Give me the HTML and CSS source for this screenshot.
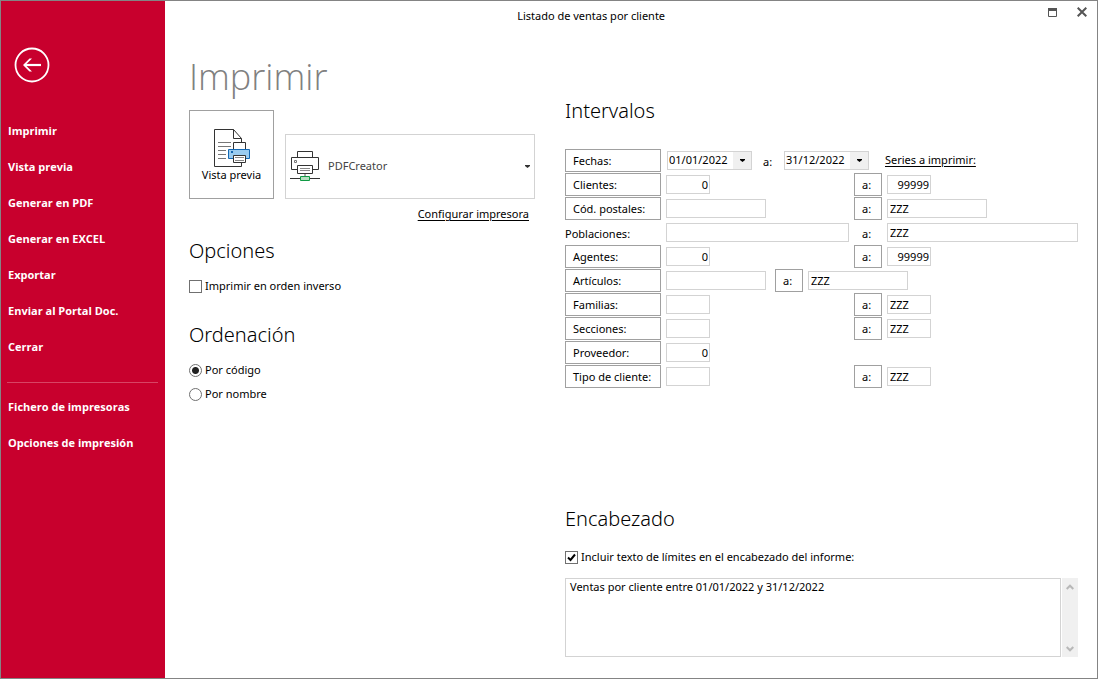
FILE: index.html
```html
<!DOCTYPE html>
<html lang="es">
<head>
<meta charset="utf-8">
<title>Listado de ventas por cliente</title>
<link rel="stylesheet" href="styles.css">
</head>
<body>
<div class="window">
  <nav class="sidebar">
    <button class="back" aria-label="Volver">
      <svg width="36" height="36" viewBox="0 0 36 36" fill="none" stroke="#fff"><circle cx="18" cy="18" r="16.5" stroke-width="1.8"/><path d="M10.500 18H27" stroke-width="2.200"/><path d="M18 11.500h-2.500L9 18l6.500 6.500H18L11.500 18z" fill="#fff" stroke="none"/></svg>
    </button>
    <ul class="menu">
      <li><a href="#">Imprimir</a></li>
      <li><a href="#">Vista previa</a></li>
      <li><a href="#">Generar en PDF</a></li>
      <li><a href="#">Generar en EXCEL</a></li>
      <li><a href="#">Exportar</a></li>
      <li><a href="#">Enviar al Portal Doc.</a></li>
      <li><a href="#">Cerrar</a></li>
    </ul>
    <hr class="divider">
    <ul class="menu">
      <li><a href="#">Fichero de impresoras</a></li>
      <li><a href="#">Opciones de impresión</a></li>
    </ul>
  </nav>
  <div class="body">
    <header class="titlebar">
      <span class="caption">Listado de ventas por cliente</span>
      <div class="controls">
        <button aria-label="Maximizar"><svg width="9" height="9" viewBox="0 0 9 9"><path d="M.5.5h8v8h-8z" fill="none" stroke="#555"/><path d="M0 0h9v3H0z" fill="#555"/></svg></button>
        <button aria-label="Cerrar ventana"><svg width="10" height="10" viewBox="0 0 10 10"><path d="M.7.7l8.600 8.600M9.300.7L.7 9.300" stroke="#555" stroke-width="2"/></svg></button>
      </div>
    </header>
    <main class="content">
      <section class="left">
        <h1>Imprimir</h1>
        <div class="print-row">
          <button class="preview">
            <svg width="36" height="38" viewBox="0 0 36 38" fill="none">
              <path d="M27.500 13V9.500L19.500.5H.5v37h27V34" fill="#fff" stroke="#333"/>
              <path d="M19.500.5v9h8" stroke="#333"/>
              <path d="M4 13.500h13M4 17.500h13M4 21.500h8M4 25.500h8M4 29.500h8" stroke="#777"/>
              <path d="M19.500 13.500h12v8h-12z" fill="#fff" stroke="#333"/>
              <path d="M14.500 20.500h21v9h-21z" fill="#9accf0" stroke="#1468b3"/>
              <path d="M17 22h2v2h-2z" fill="#1468b3"/>
              <path d="M19.500 26.500h12v7h-12z" fill="#fff" stroke="#333"/>
              <path d="M21 28.500h9M21 31.500h9" stroke="#888"/>
            </svg>
            <span>Vista previa</span>
          </button>
          <div class="printer">
            <svg width="30" height="31" viewBox="0 0 30 31" fill="none">
              <path d="M7.500 6.500v-6h15v6" fill="#fff" stroke="#333"/>
              <path d="M1.500 6.500h27v12h-27z" fill="#fff" stroke="#333"/>
              <path d="M4.500 9.500h2v2h-2z" stroke="#777"/>
              <path d="M7.500 14.500h15v8h-15z" fill="#fff" stroke="#333"/>
              <path d="M10 17.500h10M10 19.500h10" stroke="#888"/>
              <path d="M15 23v2" stroke="#aaa" stroke-width="2"/>
              <path d="M0 27.500h30" stroke="#333"/>
              <path d="M10.500 25.500h9v4h-9z" fill="#b5dfc0" stroke="#109a44"/>
            </svg>
            <select aria-label="Impresora"><option>PDFCreator</option></select>
            <svg width="5" height="3" viewBox="0 0 5 3"><path d="M0 0h5v1L2.500 3 0 1z" fill="#333"/></svg>
          </div>
        </div>
        <a class="link configure" href="#">Configurar impresora</a>
        <h2>Opciones</h2>
        <label class="choice"><input type="checkbox">Imprimir en orden inverso</label>
        <h2 class="order">Ordenación</h2>
        <label class="choice"><input type="radio" name="orden" checked>Por código</label>
        <label class="choice"><input type="radio" name="orden">Por nombre</label>
      </section>
      <section class="right">
        <h2 class="ranges-title">Intervalos</h2>
        <div class="ranges">
          <div class="row dates">
            <button class="box">Fechas:</button>
            <span class="date"><input aria-label="Fecha inicial" value="01/01/2022"><button aria-label="Abrir calendario inicial"><svg width="5" height="3" viewBox="0 0 5 3"><path d="M0 0h5v1L2.500 3 0 1z"/></svg></button></span>
            <span class="to">a:</span>
            <span class="date"><input aria-label="Fecha final" value="31/12/2022"><button aria-label="Abrir calendario final"><svg width="5" height="3" viewBox="0 0 5 3"><path d="M0 0h5v1L2.500 3 0 1z"/></svg></button></span>
            <a class="link" href="#">Series a imprimir:</a>
          </div>
          <div class="row">
            <button class="box">Clientes:</button><input class="field short num" aria-label="Cliente inicial" value="0">
            <button class="box">a:</button><input class="field short num" aria-label="Cliente final" value="99999">
          </div>
          <div class="row">
            <button class="box">Cód. postales:</button><input class="field medium" aria-label="Código postal inicial">
            <button class="box">a:</button><input class="field medium" aria-label="Código postal final" value="ZZZ">
          </div>
          <div class="row">
            <label class="plain" for="pob">Poblaciones:</label><input class="field" id="pob">
            <label class="plain mid" for="pob2">a:</label><input class="field" id="pob2" value="ZZZ">
          </div>
          <div class="row">
            <button class="box">Agentes:</button><input class="field short num" aria-label="Agente inicial" value="0">
            <button class="box">a:</button><input class="field short num" aria-label="Agente final" value="99999">
          </div>
          <div class="row articles">
            <button class="box">Artículos:</button><input class="field medium" aria-label="Artículo inicial">
            <button class="box">a:</button><input class="field medium" aria-label="Artículo final" value="ZZZ">
          </div>
          <div class="row">
            <button class="box">Familias:</button><input class="field short" aria-label="Familia inicial">
            <button class="box">a:</button><input class="field short" aria-label="Familia final" value="ZZZ">
          </div>
          <div class="row">
            <button class="box">Secciones:</button><input class="field short" aria-label="Sección inicial">
            <button class="box">a:</button><input class="field short" aria-label="Sección final" value="ZZZ">
          </div>
          <div class="row">
            <button class="box">Proveedor:</button><input class="field short num" aria-label="Proveedor" value="0">
          </div>
          <div class="row">
            <button class="box">Tipo de cliente:</button><input class="field short" aria-label="Tipo de cliente inicial">
            <button class="box">a:</button><input class="field short" aria-label="Tipo de cliente final" value="ZZZ">
          </div>
        </div>
        <div class="heading">
          <h2>Encabezado</h2>
          <label class="choice"><input type="checkbox" checked>Incluir texto de límites en el encabezado del informe:</label>
          <div class="memo">
            <textarea aria-label="Texto del encabezado">Ventas por cliente entre 01/01/2022 y 31/12/2022</textarea>
            <div class="scroll">
              <button aria-label="Subir"><svg width="8" height="6" viewBox="0 0 8 6"><path d="M.7 5L4 1.700 7.300 5" fill="none" stroke="#b8b8b8" stroke-width="2"/></svg></button>
              <button aria-label="Bajar"><svg width="8" height="6" viewBox="0 0 8 6"><path d="M.7 1L4 4.300 7.300 1" fill="none" stroke="#b8b8b8" stroke-width="2"/></svg></button>
            </div>
          </div>
        </div>
      </section>
    </main>
  </div>
</div>
</body>
</html>
```
FILE: styles.css
```css
* { box-sizing: border-box; }
body { margin: 0; font: 11px/16px "Noto Sans", "Open Sans", sans-serif; color: #000; background: #fff; }
button, input, select, textarea { font: inherit; color: inherit; margin: 0; padding: 0; border: 0; border-radius: 0; background: none; }
h1, h2, ul { margin: 0; padding: 0; font-weight: 400; }
svg { display: block; flex: none; }
a { color: inherit; }

.window { display: flex; min-height: 100vh; border: 1px solid #848484; }

.sidebar { flex: none; width: 164px; padding-top: 46px; background: #c8002d; color: #fff; }
.back { display: block; margin: 0 0 30px 13px; }
.menu { list-style: none; padding-left: 7px; font-family: "Open Sans", sans-serif; font-weight: 700; }
.menu a { display: block; line-height: 36px; text-decoration: none; }
.divider { height: 1px; margin: 17px 7px 6px 6px; border: 0; background: #d84464; }

.body { flex: 1; min-width: 0; display: flex; flex-direction: column; }
.titlebar { display: grid; grid-template-columns: 7fr auto 9fr; align-items: start; padding: 6px 10px 0 24px; }
.caption { grid-column: 2; line-height: 18px; }
.controls { display: flex; justify-content: flex-end; gap: 20px; }

.content { flex: 1; display: flex; gap: 30px; padding: 0 19px 21px 24px; }
.left { flex: none; width: 346px; display: flex; flex-direction: column; }
h1 { margin-top: 28px; font: 350 36px/48px "Open Sans", sans-serif; color: #808080; }
h2 { font: 350 20px/28px "Noto Sans", sans-serif; }

.print-row { display: flex; align-items: flex-end; gap: 11px; margin-top: 9px; }
.preview { width: 85px; height: 89px; padding: 3px 0 0; border: 1px solid #a0a0a0; display: flex; flex-direction: column; align-items: center; justify-content: center; }
.printer { flex: 1; height: 65px; display: flex; align-items: center; padding: 0 4px; border: 1px solid #d3d3d3; color: #444; }
.printer select { flex: 1; min-width: 0; padding: 0 0 2px 8px; appearance: none; }
.link { text-underline-offset: 2px; }
.configure { align-self: flex-end; margin: 7px 6px 15px 0; }

.choice { display: flex; align-items: center; gap: 3px; height: 24px; }
.choice input { appearance: none; flex: none; width: 13px; height: 13px; border: 1px solid #707070; background: #fff; }
.choice input[type="radio"] { border-radius: 50%; }
.choice input[type="radio"]:checked { background: radial-gradient(circle, #222 3px, #fff 4px); }
.choice input[type="checkbox"]:checked { background: #fff url("data:image/svg+xml,%3Csvg xmlns='http://www.w3.org/2000/svg' viewBox='0 0 11 11'%3E%3Cpath d='M2 5.500l2.500 2.500L9 2.500' fill='none' stroke='%23000' stroke-width='2'/%3E%3C/svg%3E"); }
.left h2 { margin-bottom: 9px; }
.left .order { margin: 23px 0 9px; }

.right { flex: 1; min-width: 0; display: flex; flex-direction: column; }
.ranges-title { margin: 72px 0 24px; }
.ranges { display: grid; gap: 1px; }
.row { display: grid; grid-template-columns: 96px 183px 28px 1fr; column-gap: 5px; align-items: start; height: 23px; }
.box { height: 23px; padding-left: 7px; border: 1px solid #a0a0a0; text-align: left; white-space: nowrap; }
.field { width: 100%; min-width: 0; height: 19px; margin-top: 2px; padding: 0 2px 1px; border: 1px solid #d3d3d3; }
.short { width: 44px; }
.medium { width: 100px; }
.num { text-align: right; padding-right: 1px; }
.plain { line-height: 26px; }
.mid { padding-left: 8px; }
.dates { grid-template-columns: 96px 85px 20px 85px 1fr; column-gap: 6px; }
.dates .to { padding-left: 5px; line-height: 26px; }
.dates .link { line-height: 22px; padding-left: 10px; }
.date { display: flex; height: 19px; margin-top: 2px; border: 1px solid #d3d3d3; }
.date input { flex: 1; min-width: 0; padding: 0 0 1px 1px; }
.date button { width: 18px; background: #f0f0f0; display: flex; align-items: center; justify-content: center; }
.articles { grid-template-columns: 96px 104px 28px 1fr; }

.heading { margin-top: auto; }
.heading .choice { margin: 12px 0 9px; }
.memo { display: flex; gap: 1px; height: 79px; }
.memo textarea { flex: 1; min-width: 0; padding: 0 4px; border: 1px solid #d3d3d3; resize: none; outline: 0; overflow: hidden; }
.scroll { width: 16px; display: flex; flex-direction: column; justify-content: space-between; background: #f0f0f0; padding: 6px 4px 5px; }
```
